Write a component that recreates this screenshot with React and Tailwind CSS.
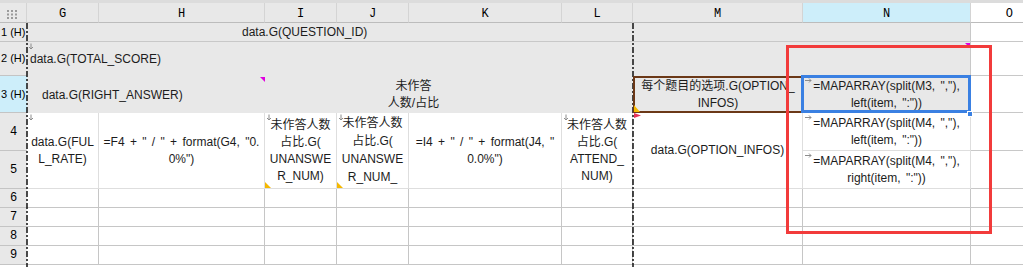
import React from "react";

// small gray arrow shown at top-left of cells with expansion
function DownMark() {
  return (
    <svg className="absolute left-[1px] top-[1px]" width="6" height="7" viewBox="0 0 6 7">
      <path d="M3 0.5V6M1 4L3 6L5 4" stroke="#8c8c8c" strokeWidth="1" fill="none" />
    </svg>
  );
}

function RightMark() {
  return (
    <svg className="absolute left-[2px] top-[2px]" width="7" height="5" viewBox="0 0 7 5">
      <path d="M0 2.5H6M4 0.5L6 2.5L4 4.5" stroke="#8c8c8c" strokeWidth="1" fill="none" />
    </svg>
  );
}

function YellowMark() {
  return (
    <svg className="absolute left-0 bottom-0" width="6" height="6" viewBox="0 0 6 6">
      <polygon points="0,0 6,6 0,6" fill="#f5b800" />
    </svg>
  );
}

function MagentaMark({ className }) {
  return (
    <svg className={className} width="5" height="5" viewBox="0 0 5 5">
      <polygon points="0,0 5,0 5,5" fill="#e000e0" />
    </svg>
  );
}

function Lines({ lines }) {
  return (
    <div className="flex flex-col items-center">
      {lines.map((l, i) => (
        <span key={i} className="whitespace-pre">
          {l}
        </span>
      ))}
    </div>
  );
}

export default function App() {
  const hdr =
    "bg-[#e8e8e8] border-r border-b border-r-[#d4d4d4] border-b-[#bcbcbc] flex items-center justify-center pt-[2px] font-['Liberation_Mono',monospace] text-[12px] text-black";
  const rowHdr =
    "bg-[#e8e8e8] border-b border-[#c4c4c4] flex items-center justify-center font-['Liberation_Mono',monospace] text-[12px] text-black";
  const rowHdrH =
    "bg-[#e8e8e8] border-b border-[#c4c4c4] flex items-center pl-[1px] font-['Liberation_Sans',sans-serif] text-[11px] text-black";
  const cell45 =
    "relative border-r border-b border-[#dedede] bg-white flex items-center justify-center overflow-hidden leading-[17px]";
  const cellEmpty = "border-r border-b border-[#c6c6c6] bg-white";

  return (
    <div className="relative w-[1023px] h-[267px] overflow-hidden bg-white font-['Liberation_Sans','Noto_Sans_CJK_SC',sans-serif] text-[12px] text-[#1c1c1c]">
      <div className="h-[3px] bg-[#dcdcdc]" />
      <div className="grid grid-cols-[27px_72px_166px_72px_72px_153px_71px_170px_168px_52px] grid-rows-[20px_19px_34px_37px_38px_38px_19px_19px_19px_19px]">
        {/* column header */}
        <div className={hdr}>
          <svg width="12" height="9" viewBox="0 0 12 9" className="mt-[1px]">
            <rect x="0" y="0" width="2" height="2" fill="#9a9a9a" />
            <rect x="4" y="0" width="2" height="2" fill="#9a9a9a" />
            <rect x="8" y="0" width="2" height="2" fill="#9a9a9a" />
            <rect x="0" y="3.5" width="2" height="2" fill="#9a9a9a" />
            <rect x="4" y="3.5" width="2" height="2" fill="#9a9a9a" />
            <rect x="8" y="3.5" width="2" height="2" fill="#9a9a9a" />
            <rect x="0" y="7" width="2" height="2" fill="#9a9a9a" />
            <rect x="4" y="7" width="2" height="2" fill="#9a9a9a" />
            <rect x="8" y="7" width="2" height="2" fill="#9a9a9a" />
          </svg>
        </div>
        <div className={hdr}>G</div>
        <div className={hdr}>H</div>
        <div className={hdr}>I</div>
        <div className={hdr}>J</div>
        <div className={hdr}>K</div>
        <div className={hdr}>L</div>
        <div className={hdr}>M</div>
        <div className="bg-[#cdeefa] border-r border-b border-r-[#d4d4d4] border-b-[#bcbcbc] flex items-center justify-center pt-[2px] font-['Liberation_Mono',monospace] text-[12px] text-black">
          N
        </div>
        <div className="bg-white border-b border-[#bcbcbc] flex items-center justify-end pr-[10px] pt-[2px] font-['Liberation_Mono',monospace] text-[12px] text-black">
          O
        </div>

        {/* row 1 */}
        <div className={rowHdrH}>1 (H)</div>
        <div className="col-span-8 bg-[#e8e8e8] border-r border-b border-[#c8c8c8] flex items-center pl-[215px] text-[12px]">
          data.G(QUESTION_ID)
        </div>
        <div className="border-b border-[#c8c8c8] bg-white" />

        {/* row 2 */}
        <div className={rowHdrH}>2 (H)</div>
        <div className="relative col-span-8 bg-[#e8e8e8] border-r border-[#c8c8c8] flex items-center pl-[3px]">
          <DownMark />
          data.G(TOTAL_SCORE)
          <MagentaMark className="absolute right-0 top-[1px]" />
        </div>
        <div className="border-b border-[#c8c8c8] bg-white" />

        {/* row 3 */}
        <div className="bg-[#cdeefa] border-b border-[#c4c4c4] flex items-center pl-[1px] font-['Liberation_Sans',sans-serif] text-[11px] text-black">
          3 (H)
        </div>
        <div className="relative col-span-2 bg-[#e8e8e8] flex items-center pl-[15px]">
          data.G(RIGHT_ANSWER)
          <MagentaMark className="absolute right-0 top-[1px]" />
        </div>
        <div className="col-span-3 bg-[#e8e8e8] flex items-center justify-center leading-[17px]">
          <Lines lines={["未作答", "人数/占比"]} />
        </div>
        <div className="bg-[#e8e8e8]" />
        <div className="relative z-10 bg-[#e8e8e8] border-2 border-[#6b3817] flex items-center justify-center leading-[17px]">
          <Lines lines={["每个题目的选项.G(OPTION_", "INFOS)"]} />
          <svg className="absolute left-[-1px] bottom-[-1px]" width="6" height="7" viewBox="0 0 6 7">
            <polygon points="0,0 6,7 0,7" fill="#f5b800" />
          </svg>
          <svg className="absolute left-[-1px] bottom-[-7px]" width="7" height="5" viewBox="0 0 7 5">
            <polygon points="0,0 7,2.5 0,5" fill="#e8345a" />
          </svg>
        </div>
        <div className="relative z-10 bg-[#e8e8e8] border-r border-[#d0d0d0] flex items-center justify-center leading-[17px] [word-spacing:2px]">
          <div className="absolute left-[-2px] top-[-1px] right-[-1px] bottom-0 border-[3px] border-[#3a80e2]" />
          <div className="absolute right-[-3px] bottom-[-4px] w-[6px] h-[6px] bg-[#3a80e2] border border-white" />
          <RightMark />
          <Lines lines={['=MAPARRAY(split(M3, ","),', 'left(item, ":"))']} />
        </div>
        <div className="border-b border-[#c8c8c8] bg-white" />

        {/* row 4 */}
        <div className={rowHdr}>4</div>
        <div className={"row-span-2 " + cell45}>
          <DownMark />
          <Lines lines={["data.G(FUL", "L_RATE)"]} />
        </div>
        <div className={"row-span-2 " + cell45 + " [word-spacing:2px]"}>
          <Lines lines={['=F4 + " / " + format(G4, "0.', '0%")']} />
        </div>
        <div className={"row-span-2 " + cell45}>
          <DownMark />
          <YellowMark />
          <Lines lines={["未作答人数", "占比.G(", "UNANSWE", "R_NUM)"]} />
        </div>
        <div className="row-span-2 relative border-r border-b border-[#dedede] bg-white overflow-hidden leading-[18px] pt-[1px]">
          <DownMark />
          <YellowMark />
          <Lines lines={["未作答人数", "占比.G(", "UNANSWE", "R_NUM_", "RATA)"]} />
        </div>
        <div className={"row-span-2 " + cell45 + " [word-spacing:2px]"}>
          <Lines lines={['=I4 + " / " + format(J4, "', '0.0%")']} />
        </div>
        <div className={"row-span-2 " + cell45}>
          <DownMark />
          <Lines lines={["未作答人数", "占比.G(", "ATTEND_", "NUM)"]} />
        </div>
        <div className={"row-span-2 " + cell45}>data.G(OPTION_INFOS)</div>
        <div className={cell45 + " [word-spacing:2px]"}>
          <RightMark />
          <Lines lines={['=MAPARRAY(split(M4, ","),', 'left(item, ":"))']} />
        </div>
        <div className="border-b border-[#c8c8c8] bg-white" />

        {/* row 5 */}
        <div className={rowHdr}>5</div>
        <div className={cell45 + " [word-spacing:2px]"}>
          <RightMark />
          <Lines lines={['=MAPARRAY(split(M4, ","),', 'right(item, ":"))']} />
        </div>
        <div className="border-b border-[#c8c8c8] bg-white" />

        {/* rows 6-9 */}
        {["6", "7", "8", "9"].map((r) => (
          <React.Fragment key={r}>
            <div className={rowHdr}>{r}</div>
            <div className={cellEmpty} />
            <div className={cellEmpty} />
            <div className={cellEmpty} />
            <div className={cellEmpty} />
            <div className={cellEmpty} />
            <div className={cellEmpty} />
            <div className={cellEmpty} />
            <div className={cellEmpty} />
            <div className="border-b border-[#c6c6c6] bg-white" />
          </React.Fragment>
        ))}
      </div>

      {/* page-break dash-dot lines */}
      <svg className="absolute left-[26px] top-[23px]" width="2" height="244">
        <line x1="1" y1="0" x2="1" y2="244" stroke="#111" strokeWidth="1.5" strokeDasharray="6 2 2 2" />
      </svg>
      <svg className="absolute left-[632px] top-[23px]" width="2" height="244">
        <line x1="1" y1="0" x2="1" y2="244" stroke="#111" strokeWidth="1.5" strokeDasharray="6 2 2 2" />
      </svg>

      {/* red highlight box */}
      <div className="absolute left-[786px] top-[45px] w-[206px] h-[189px] border-[3px] border-[#f23b3b] z-20" />
    </div>
  );
}
